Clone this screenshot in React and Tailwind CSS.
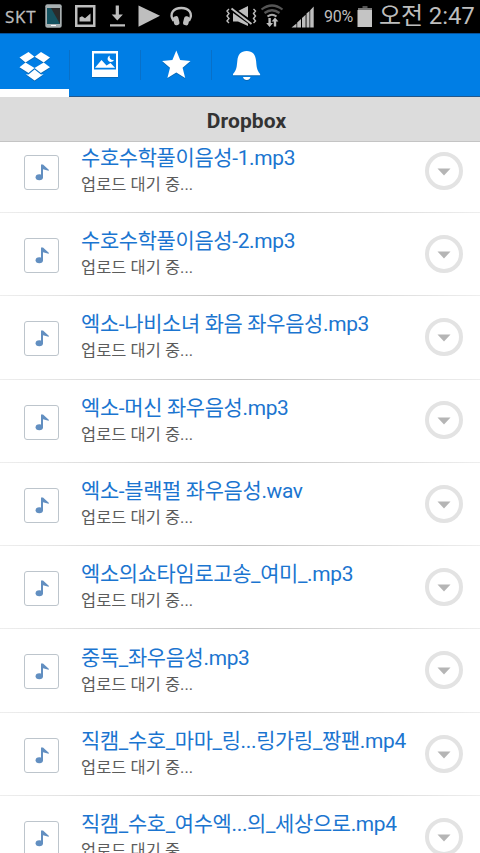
const files = [
    '수호수학풀이음성-1.mp3',
    '수호수학풀이음성-2.mp3',
    '엑소-나비소녀 화음 좌우음성.mp3',
    '엑소-머신 좌우음성.mp3',
    '엑소-블랙펄 좌우음성.wav',
    '엑소의쇼타임로고송_여미_.mp3',
    '중독_좌우음성.mp3',
    '직캠_수호_마마_링...링가링_짱팬.mp4',
    '직캠_수호_여수엑...의_세상으로.mp4',
];

function StatusBar() {
    return (
        <div className="flex h-[33px] shrink-0 items-center bg-black text-[#bebebe]">
            <span className="w-[45px] shrink-0 pl-[5px] text-[17px] leading-none tracking-[0.7px] [-webkit-text-stroke:0.3px] font-['Open_Sans','Noto_Sans',sans-serif]">SKT</span>
            <svg width="155" height="33" viewBox="45 0 155 33" fill="#bebebe" className="shrink-0">
                <rect x="45.3" y="4.3" width="16.4" height="23.4" rx="2" fill="#a9b0b2" />
                <path d="M47 8h13v16H47z" fill="#2b2b2b" />
                <path d="M47 8h4l9 16H47z" fill="#155361" />
                <path d="M51 25.5h5" stroke="#fff" />
                <path fillRule="evenodd" d="M75 5h20.500v22H75zM77.500 7.500v17h15.500v-17z" />
                <path d="M79.500 21.500v-4l2.500-1.300 3 2 5.500-4.700v8z" />
                <path d="M115.700 5.500h3.200v9h4l-5.600 6-5.600-6h4zM110 24.300h15v2.200h-15z" />
                <path d="M138.500 5.500v21.300l21.500-11z" />
                <path d="M173.500 21c-5-8 .5-13 7.800-13s12.500 5 7.700 13" fill="none" stroke="#bebebe" strokeWidth="2.300" />
                <rect x="173.500" y="16.500" width="5.500" height="9" rx="2.200" transform="rotate(-14 175 21)" />
                <rect x="183.500" y="16.500" width="5.500" height="9" rx="2.200" transform="rotate(14 187 21)" />
            </svg>
            <svg width="122" height="33" viewBox="200 0 122 33" fill="#bebebe" className="shrink-0">
                <path d="M233 11h5l10-5v20l-10-4.500h-5z" />
                <path d="M231 8.500l21 15" stroke="#000" strokeWidth="5" />
                <path d="M231.500 8.500l20 15.500" stroke="#bebebe" strokeWidth="2" />
                <path d="M229 9l-2 2 2 2.500-2 2.500 2 2.500-2 2.500 2 2M253.500 9l2 2-2 2.500 2 2.500-2 2.500 2 2.500-2 2" fill="none" stroke="#bebebe" strokeWidth="1.400" />
                <path d="M261.500 9.500q10.500-8 21 0M264.500 13q7.500-5.500 15 0" fill="none" stroke="#555" strokeWidth="2.200" />
                <path d="M267.500 16.500q4.500-3.500 9 0" fill="none" stroke="#aaa" strokeWidth="2" />
                <path d="M268.400 18h2.400v5h2.200l-3.400 4-3.400-4h2.200zM273.800 26.500h2.400v-5h2.200l-3.400-4-3.400 4h2.200z" />
                <path d="M291.500 27.500l5-4v4zM297.200 27.500v-5l3.800-3.500v8.500zM302 27.500V18l3.600-3.300v12.800zM306.500 27.500V13.500l3-2.500v16.500zM310.200 27.500V10.300l3.500-3.800v21z" />
            </svg>
            <span className="w-[35px] shrink-0 pl-[2px] text-[16px] leading-none tracking-[-0.3px] font-['Roboto',sans-serif]">90%</span>
            <svg width="17" height="22" viewBox="0 0 17 22" className="shrink-0">
                <path d="M5.500 0h5v2h-5z" fill="#555" />
                <path d="M1 2h14v2H1z" fill="#777" />
                <path d="M.5 4h14.500v17H.5z" fill="#c4c4c4" />
            </svg>
            <span className="ml-[5px] pb-[2px] text-[24px] leading-none tracking-[-0.1px] whitespace-nowrap font-['Roboto','Noto_Sans_CJK_KR',sans-serif]">오전 2:47</span>
        </div>
    );
}

function NavBar() {
    return (
        <nav className="flex h-[64px] shrink-0 border-t border-b border-t-[#07529b] border-b-[#23588c] bg-[#007ee5]">
            <div className="flex h-[62.5px] w-[69px] flex-col justify-between">
                <svg width="69" height="50" viewBox="0 34 69 50" fill="#fff">
                    <g className="drop-shadow-[0_1px_0_#0868b5]">
                        <path d="M19.500 57.500L28.500 52l6 4.800-9 5.700z" />
                        <path d="M50 57.500L41 52l-6.300 4.800 9 5.700z" />
                        <path d="M19.500 67.300l6-4.800 9 5.600-6 4.900z" />
                        <path d="M50 67.300l-6.300-4.800-9.200 5.600 6.300 4.900z" />
                        <path d="M25.800 74.200l2.700.2 6.100-4.900 6.300 4.900 2.700-.2-9 6.200z" />
                    </g>
                </svg>
                <div className="h-[8px] bg-white" />
            </div>
            <div className="my-4 w-px bg-[#0870c8]" />
            <svg width="70" height="62" viewBox="70 34 70 62">
                <g className="drop-shadow-[0_1px_0_#0868b5]">
                    <path d="M92 51h26v26H92z" fill="#fff" />
                </g>
                <path d="M94 53.500h22v16H94z" fill="#007ee5" />
                <path d="M95 67.700l6.500-7.700 5 5.500 4-2.500 4.500 4.700z" fill="#fff" />
                <path d="M109.800 55.500a3.300 3.300 0 1 0 4.200 4.200 3.200 3.200 0 0 1-4.200-4.200z" fill="#fff" />
            </svg>
            <div className="my-4 w-px bg-[#0870c8]" />
            <svg width="70" height="62" viewBox="141 34 70 62" fill="#fff">
                <g className="drop-shadow-[0_1px_0_#0868b5]">
                    <path d="M176.300 50.500l3.900 9.600 10.300.9-7.900 6.800 2.600 10.200-8.900-5.600-8.900 5.600 2.600-10.200-7.900-6.800 10.300-.9z" />
                </g>
            </svg>
            <div className="my-4 w-px bg-[#0870c8]" />
            <svg width="70" height="62" viewBox="212 34 70 62" fill="#fff">
                <g className="drop-shadow-[0_1px_0_#0868b5]">
                    <path d="M233 74c3.800-4 3.700-7.500 4.300-13 .5-6.500 3.500-10 9.400-10s8.900 3.500 9.400 10c.6 5.500.5 9 4 13v1.300H233z" />
                    <path d="M243 77h7.500c-.5 4-7 4-7.500 0z" />
                </g>
            </svg>
        </nav>
    );
}

function FileRow({ name }) {
    return (
        <li className="h-[83.3px]">
            <div className="flex h-[82.3px]">
                <div className="mt-[25px] ml-[24px] flex h-[35px] w-[35px] shrink-0 items-center justify-center rounded-[3px] border-[1.5px] border-[#bdc5cc] bg-white">
                    <svg width="15" height="17" viewBox="0 0 15 17" fill="#628fc1" className="ml-[2px] shrink-0">
                        <ellipse cx="4.300" cy="13.300" rx="3.700" ry="3" />
                        <path d="M6 .5h2l6 5.500-.4.800L8 5.300v8H6z" />
                    </svg>
                </div>
                <div className="ml-[22px] min-w-0 flex-1 pt-[14.2px]">
                    <div className="text-[20.9px] leading-[28px] tracking-[-0.32px] whitespace-nowrap text-[#1b75d0]">{name}</div>
                    <div className="text-[16.4px] leading-[25px] tracking-[0.05px] whitespace-nowrap text-[#5c5c5c]">업로드 대기 중...</div>
                </div>
                <div className="mt-[21.9px] mr-[17px] flex h-[38px] w-[38px] shrink-0 items-center justify-center rounded-full border-4 border-[#e3e3e3]">
                    <svg width="14" height="8" viewBox="0 0 14 8" fill="#b5b5b5" className="mt-[2px]">
                        <path d="M.5.500h13L7 7.500z" />
                    </svg>
                </div>
            </div>
            <div className="h-px bg-linear-to-r from-[#eeeeee] via-[#c4c4c4] to-[#eeeeee]" />
        </li>
    );
}

export default function App() {
    return (
        <div className="flex h-[853px] w-[480px] flex-col overflow-hidden bg-white font-['Roboto','Noto_Sans_CJK_KR',sans-serif]">
            <StatusBar />
            <NavBar />
            <h1 className="flex h-[45px] shrink-0 items-center justify-center border-b border-[#c4c4c4] bg-[#dcdcdc] pt-[5px] pl-[13px] text-[21px] font-bold tracking-[0.1px] text-[#333]">
                Dropbox
            </h1>
            <div className="min-h-0 flex-1 overflow-hidden">
                <ul className="-mt-[12.4px]">
                    {files.map((name) => (
                        <FileRow key={name} name={name} />
                    ))}
                </ul>
            </div>
        </div>
    );
}
